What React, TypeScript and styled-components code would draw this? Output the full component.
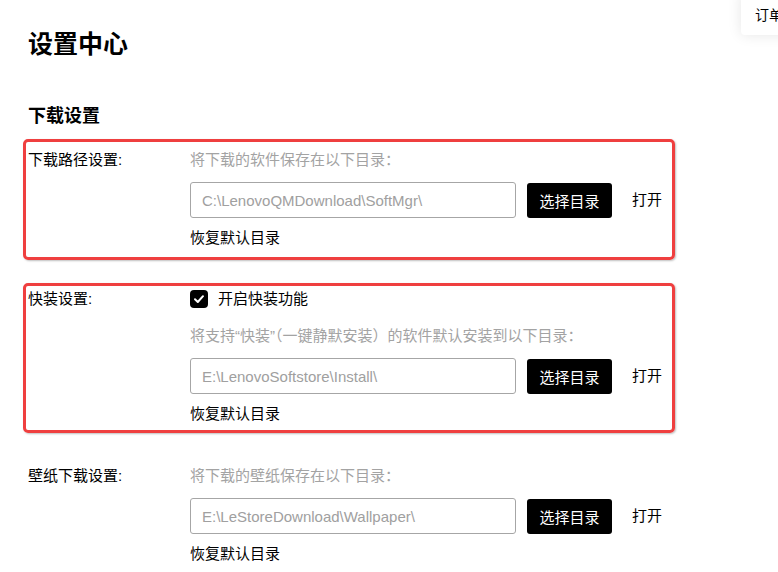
import styled, { createGlobalStyle } from "styled-components";

// Data for each download directory setting.
const SETTINGS = [
  {
    label: "下载路径设置:",
    hint: "将下载的软件保存在以下目录：",
    path: "C:\\LenovoQMDownload\\SoftMgr\\",
    highlight: { top: 11, bottom: 12 },
  },
  {
    label: "快装设置:",
    quickInstall: true,
    hint: "将支持“快装”（一键静默安装）的软件默认安装到以下目录：",
    path: "E:\\LenovoSoftstore\\Install\\",
    highlight: { top: 6, bottom: 9 },
  },
  {
    label: "壁纸下载设置:",
    hint: "将下载的壁纸保存在以下目录：",
    path: "E:\\LeStoreDownload\\Wallpaper\\",
  },
];

const App = () => {
  return (
    <>
      <GlobalStyle />
      <OrderTab>订单</OrderTab>
      <Page>
        <Title>设置中心</Title>
        <SectionTitle>下载设置</SectionTitle>
        <List>
          {SETTINGS.map((setting, index) => (
            <Setting
              key={setting.label}
              $gap={index === 0 ? 0 : index === 1 ? 41 : 42}
              $outlined={!!setting.highlight}
              $top={setting.highlight?.top ?? 0}
              $bottom={setting.highlight?.bottom ?? 0}
            >
              <Label>{setting.label}</Label>
              <Content>
                {setting.quickInstall && (
                  <CheckRow>
                    <CheckBox>
                      <svg width="12" height="12" viewBox="0 0 12 12">
                        <path
                          d="M2 6.3 L4.8 9 L10 3.2"
                          fill="none"
                          stroke="#fff"
                          strokeWidth="2"
                          strokeLinecap="round"
                          strokeLinejoin="round"
                        />
                      </svg>
                    </CheckBox>
                    开启快装功能
                  </CheckRow>
                )}
                <Hint $spaced={!!setting.quickInstall}>{setting.hint}</Hint>
                <PathRow>
                  <PathInput readOnly value={setting.path} />
                  <ChooseButton>选择目录</ChooseButton>
                  <OpenLink>打开</OpenLink>
                </PathRow>
                <Restore>恢复默认目录</Restore>
              </Content>
            </Setting>
          ))}
        </List>
      </Page>
    </>
  );
};

// Styled components.
const GlobalStyle = createGlobalStyle`
  body {
    margin: 0;
    background: #fff;
    color: #000;
    font-family: "Liberation Sans", "Noto Sans CJK SC", sans-serif;
    overflow: hidden;
  }
`;

const Page = styled.div`
  padding: 28px 28px 0;
`;

const Title = styled.h1`
  font-size: 25px;
  font-weight: 700;
  line-height: 32px;
  margin: 0;
`;

const SectionTitle = styled.h2`
  font-size: 18px;
  font-weight: 700;
  line-height: 24px;
  margin: 44px 0 22px;
`;

const List = styled.div`
  display: flex;
  flex-direction: column;
  width: 644px;
`;

const Setting = styled.div<{
  $gap: number;
  $outlined: boolean;
  $top: number;
  $bottom: number;
}>`
  display: grid;
  grid-template-columns: 162px 1fr;
  margin-top: ${(props) => props.$gap}px;
  position: relative;

  &::before {
    content: "";
    display: ${(props) => (props.$outlined ? "block" : "none")};
    position: absolute;
    top: ${(props) => -props.$top}px;
    bottom: ${(props) => -props.$bottom}px;
    left: -5px;
    right: -3px;
    border: 3px solid #ef3f3f;
    border-radius: 5px;
    box-shadow: 1px 1px 2px rgba(0, 0, 0, 0.25);
    pointer-events: none;
  }
`;

const Label = styled.div`
  font-size: 15px;
  line-height: 20px;
`;

const Content = styled.div`
  display: flex;
  flex-direction: column;
  font-size: 15px;
  line-height: 20px;
`;

const CheckRow = styled.label`
  align-items: center;
  display: flex;
  gap: 10px;
  height: 20px;
`;

const CheckBox = styled.span`
  align-items: center;
  background: #000;
  border-radius: 4px;
  display: flex;
  height: 18px;
  justify-content: center;
  width: 18px;
`;

const Hint = styled.div<{ $spaced: boolean }>`
  color: #a3a3a3;
  margin-top: ${(props) => (props.$spaced ? "17px" : "0")};
`;

const PathRow = styled.div`
  align-items: center;
  display: flex;
  margin-top: 12px;
`;

const PathInput = styled.input`
  border: 1px solid #a6a6a6;
  border-radius: 3px;
  box-sizing: border-box;
  color: #a0a0a0;
  font-family: "Liberation Sans", sans-serif;
  font-size: 15px;
  height: 36px;
  outline: none;
  padding: 0 11px;
  width: 326px;
`;

const ChooseButton = styled.button`
  background: #000;
  border: none;
  border-radius: 3px;
  color: #fff;
  font-family: "Noto Sans CJK SC", sans-serif;
  font-size: 15px;
  height: 35px;
  margin-left: 11px;
  padding: 0;
  width: 85px;
`;

const OpenLink = styled.span`
  margin-left: 20px;
`;

const Restore = styled.div`
  margin-top: 10px;
`;

const OrderTab = styled.div`
  background: #fff;
  border-radius: 4px;
  box-shadow: 0 0 14px rgba(0, 0, 0, 0.1);
  font-family: "Noto Sans CJK SC", sans-serif;
  font-size: 14px;
  left: 741px;
  line-height: 20px;
  padding: 12px 14px 11px;
  position: absolute;
  top: -8px;
  width: 60px;
`;

export default App;
